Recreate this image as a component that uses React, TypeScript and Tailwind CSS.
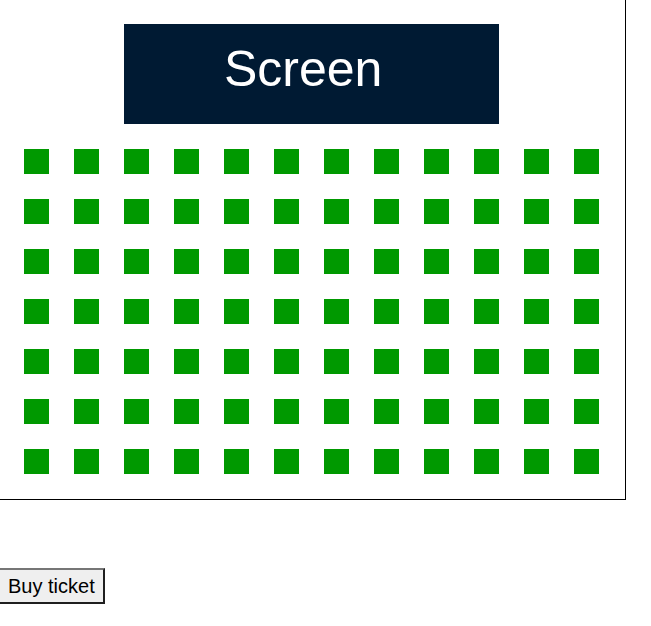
const rows = Array.from({ length: 7 })
const cols = Array.from({ length: 12 })

export default function App() {
  return (
    <div className="bg-white w-[651px] h-[626px] overflow-hidden">
      <div className="w-[626px] h-[500px] border-r border-b border-black pt-[24px]">
        <div className="ml-[124px] w-[375px] h-[100px] bg-[#001a33] pl-[100px] pt-[20px]">
          <span className="block text-white text-[50px] leading-[50px] font-['Liberation_Sans',Arial,sans-serif]">
            Screen
          </span>
        </div>
        <div className="ml-[24px] mt-[25px] grid grid-cols-[repeat(12,25px)] gap-[25px]">
          {rows.map((_, r) =>
            cols.map((_, c) => (
              <div key={`${r}-${c}`} className="w-[25px] h-[25px] bg-[#009900]" />
            ))
          )}
        </div>
      </div>
      <button className="mt-[68px] h-[36px] w-[105px] flex items-center pl-[8px] bg-[#efefef] border-t-2 border-t-[#767676] border-r-2 border-b-2 border-r-[#1f1f1f] border-b-[#1f1f1f] text-black text-[20px] leading-none font-['Liberation_Sans',Arial,sans-serif]">
        Buy ticket
      </button>
    </div>
  )
}
